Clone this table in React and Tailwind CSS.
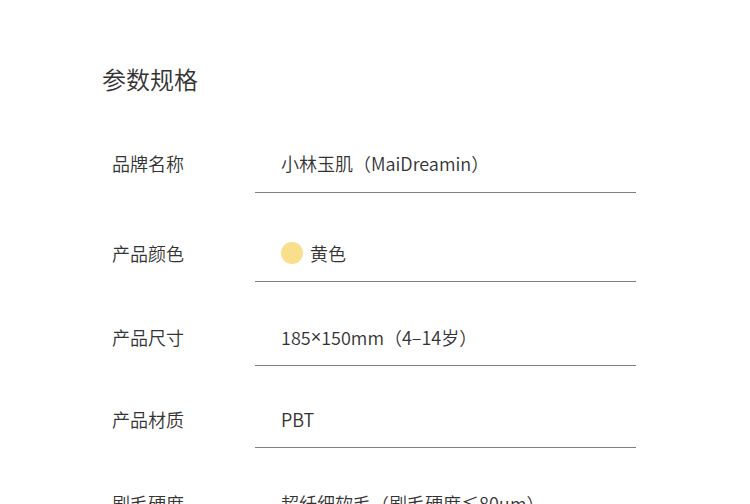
import React from "react";

const FONT = { fontFamily: '"Noto Sans CJK SC", "Noto Sans", sans-serif' };

function Row({ label, children, mt, pb = "pb-[14px]" }) {
  return (
    <div className={`flex ${mt}`}>
      <div className="w-[153px] shrink-0 pl-[10px] text-[18px] leading-[28px] text-[#333] font-[350]">{label}</div>
      <div className={`w-[381px] shrink-0 border-b border-[#808080] pl-[26px] ${pb} text-[18px] leading-[28px] text-[#333] font-[350]`}>
        {children}
      </div>
    </div>
  );
}

export default function App() {
  return (
    <div className="w-[750px] h-[504px] overflow-hidden bg-white pl-[102px] pt-[63px]" style={FONT}>
      <h2 className="text-[24px] leading-[32px] text-[#333] font-[350]">参数规格</h2>
      <div>
        <Row label="品牌名称" mt="mt-[54px]" pb="pb-[15px]">小林玉肌（MaiDreamin）</Row>
        <Row label="产品颜色" mt="mt-[46px]">
          <div className="flex items-center">
            <span className="inline-block w-[22px] h-[22px] rounded-full bg-[#f8df8c]"></span>
            <span className="ml-[7px]">黄色</span>
          </div>
        </Row>
        <Row label="产品尺寸" mt="mt-[41px]">
          <div className="flex items-center h-[28px]">
            <span>185</span>
            <span className="leading-none" style={{ fontFamily: '"Liberation Sans", sans-serif' }}>×</span>
            <span>150mm（4–14岁）</span>
          </div>
        </Row>
        <Row label="产品材质" mt="mt-[39px]">PBT</Row>
        <Row label="刷毛硬度" mt="mt-[41px]">超纤细软毛（刷毛硬度≤80μm）</Row>
      </div>
    </div>
  );
}
